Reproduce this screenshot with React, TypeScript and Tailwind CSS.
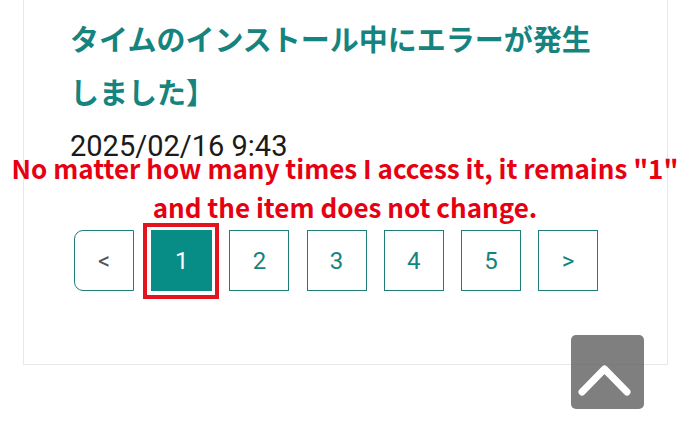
import React from 'react'

const pages = ['1', '2', '3', '4', '5']

const App = () => {
  return (
    <div className="relative w-[690px] h-[444px] overflow-hidden bg-white">
      {/* Article card */}
      <div className="ml-[23px] w-[645px] h-[365px] border-x border-b border-[#e8e8e8] pl-[46px] pr-[60px] pt-[12px]">
        <h2 className="font-['Noto_Sans_CJK_JP',sans-serif] font-bold text-[29px] leading-[53px] text-[#15847f]">
          タイムのインストール中にエラーが発生しました】
        </h2>
        <p className="mt-[14px] font-['Roboto',sans-serif] text-[29px] leading-[28px] text-[#1a1a1a]">
          2025/02/16 9:43
        </p>

        {/* Pagination */}
        <nav className="mt-[70px] ml-[4px] flex gap-[17.2px] font-['Roboto',sans-serif] text-[24px]">
          <button className="w-[60px] h-[61px] flex items-center justify-center border border-[#1f7c79] rounded-l-[9px] text-[#555]">
            &lt;
          </button>
          {pages.map((p) => (
            <div key={p} className="relative">
              <button
                className={
                  p === '1'
                    ? 'w-[61px] h-[61px] flex items-center justify-center bg-[#078c86] border border-[#078c86] text-white'
                    : 'w-[60px] h-[61px] flex items-center justify-center border border-[#1f7c79] text-[#15847f]'
                }
              >
                {p}
              </button>
              {p === '1' && (
                <span className="absolute -left-[8px] -right-[7px] -top-[7px] -bottom-[8px] border-4 border-[#e3141e]" />
              )}
            </div>
          ))}
          <button className="w-[60px] h-[61px] flex items-center justify-center border border-[#1f7c79] text-[#15847f]">
            &gt;
          </button>
        </nav>
      </div>

      {/* Annotation */}
      <div className="absolute left-0 right-0 top-[148px] text-center font-['Noto_Sans_CJK_JP',sans-serif] font-bold text-[26px] leading-[39px] text-[#e60012]">
        <p className="whitespace-nowrap">No matter how many times I access it, it remains "1"</p>
        <p>and the item does not change.</p>
      </div>

      {/* Back to top */}
      <button className="absolute left-[571px] top-[335px] w-[73px] h-[74px] rounded-[5px] bg-[#5f5f5f]/80">
        <svg viewBox="0 0 73 74" className="w-full h-full" fill="none">
          <path d="M11 57 L33.5 34 L56 57" stroke="white" strokeWidth={7} strokeLinecap="round" strokeLinejoin="round" />
        </svg>
      </button>
    </div>
  )
}

export default App
